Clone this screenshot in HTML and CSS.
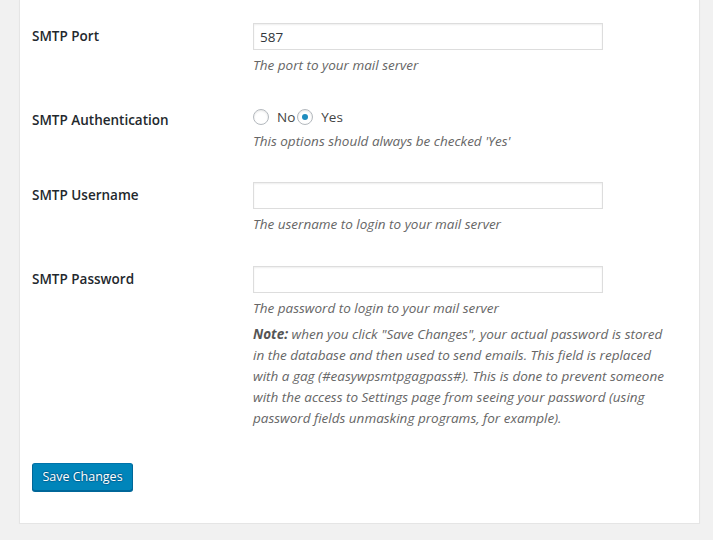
FILE: index.html
```html
<!DOCTYPE html>
<html lang="en">
<head>
<meta charset="utf-8">
<title>SMTP Settings</title>
<link rel="stylesheet" href="styles.css">
</head>
<body>
<div class="panel">
  <form class="settings">
    <div class="row">
      <div class="label">SMTP Port</div>
      <div class="field">
        <input class="text-input" type="text" value="587">
        <p class="description">The port to your mail server</p>
      </div>
    </div>
    <div class="row">
      <div class="label">SMTP Authentication</div>
      <div class="field field-radio">
        <div class="radios">
          <label class="radio"><span class="radio-dot"></span><span class="radio-text">No</span></label>
          <label class="radio"><span class="radio-dot checked"></span><span class="radio-text">Yes</span></label>
        </div>
        <p class="description desc-tight">This options should always be checked 'Yes'</p>
      </div>
    </div>
    <div class="row">
      <div class="label">SMTP Username</div>
      <div class="field">
        <input class="text-input" type="text" value="">
        <p class="description">The username to login to your mail server</p>
      </div>
    </div>
    <div class="row">
      <div class="label">SMTP Password</div>
      <div class="field">
        <input class="text-input" type="text" value="">
        <p class="description">The password to login to your mail server</p>
        <p class="description note"><strong>Note:</strong> when you click "Save Changes", your actual password is stored in the database and then used to send emails. This field is replaced with a gag (#easywpsmtpgagpass#). This is done to prevent someone with the access to Settings page from seeing your password (using password fields unmasking programs, for example).</p>
      </div>
    </div>
    <div class="submit">
      <button class="button-primary" type="button">Save Changes</button>
    </div>
  </form>
</div>
</body>
</html>
```

FILE: styles.css
```css
html, body {
  margin: 0;
  padding: 0;
  background: #f1f1f1;
}
body {
  font-family: "Open Sans", "Noto Sans", sans-serif;
  font-size: 13px;
  color: #444;
  padding-left: 19px;
}
.panel {
  background: #fff;
  border: 1px solid #e5e5e5;
  border-top: none;
  box-shadow: 0 1px 1px rgba(0, 0, 0, 0.04);
  width: 681px;
  box-sizing: border-box;
  padding: 7px 12px 32px 12px;
}
.settings {
  margin: 0;
}
.row {
  display: grid;
  grid-template-columns: 221px 1fr;
}
.label {
  padding-top: 20px;
  line-height: 18px;
  font-weight: 600;
  color: #23282d;
  font-size: 13.5px;
}
.field {
  padding: 16px 10px 15px 0;
}
.field-radio {
  padding-bottom: 14px;
}
.text-input {
  display: block;
  box-sizing: border-box;
  width: 350px;
  height: 27px;
  margin: 0;
  padding: 2px 6px;
  border: 1px solid #ddd;
  box-shadow: inset 0 1px 2px rgba(0, 0, 0, 0.07);
  background: #fff;
  color: #32373c;
  font-family: inherit;
  font-size: 13.5px;
  outline: none;
}
.description {
  margin: 5px 0 0 0;
  font-style: italic;
  color: #666;
  line-height: 21px;
  font-size: 13.5px;
}
.desc-tight {
  margin-top: 4px;
}
.note strong {
  font-weight: 700;
  color: #555;
}
.radios {
  display: flex;
  align-items: center;
  height: 20px;
  color: #444;
  font-size: 13.5px;
}
.radio {
  display: flex;
  align-items: center;
}
.radio-text {
  margin-right: 2px;
}
.radio-dot {
  box-sizing: border-box;
  width: 16px;
  height: 16px;
  border: 1px solid #b4b9be;
  border-radius: 50%;
  box-shadow: inset 0 1px 2px rgba(0, 0, 0, 0.1);
  margin-right: 8px;
  position: relative;
  background: #fff;
}
.radio-dot.checked::after {
  content: "";
  position: absolute;
  left: 4px;
  top: 4px;
  width: 6px;
  height: 6px;
  border-radius: 50%;
  background: #1e8cbe;
}
.submit {
  padding-top: 19px;
}
.button-primary {
  display: block;
  box-sizing: border-box;
  height: 28px;
  width: 101px;
  padding: 0 0 1px;
  white-space: nowrap;
  text-align: center;
  background: #0085ba;
  border: 1px solid #0073aa;
  border-color: #0073aa #006799 #006799;
  border-radius: 3px;
  box-shadow: 0 1px 0 #006799;
  color: #fff;
  font-family: inherit;
  font-size: 12.5px;
  line-height: 26px;
  text-shadow: 0 -1px 1px #006799, 1px 0 1px #006799, 0 1px 1px #006799, -1px 0 1px #006799;
}
```
